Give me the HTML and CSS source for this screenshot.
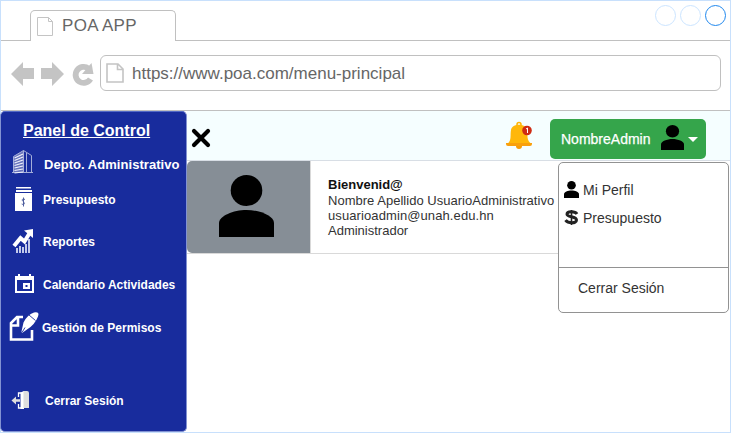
FILE: index.html
```html
<!DOCTYPE html>
<html lang="es">
<head>
<meta charset="utf-8">
<title>POA APP</title>
<link rel="stylesheet" href="styles.css">
</head>
<body>
<svg width="0" height="0" class="defs"><symbol id="person" viewBox="0 0 54 62" preserveAspectRatio="none"><circle cx="27" cy="15.5" r="15.5"/><path d="M0 62V48C0 41 14 35 27 35s27 6 27 13v14z"/></symbol></svg>
<div class="window">
  <header class="tabs">
    <div class="tab">
      <svg class="page-small" width="17" height="20" viewBox="0 0 17 20"><path d="M.5.5h11l4 4v14H.5zM11.5.5v4h4" fill="none" stroke="#c4c4c4"/></svg>
      <span>POA APP</span>
    </div>
    <div class="controls"><i></i><i></i><i class="active"></i></div>
  </header>
  <div class="toolbar">
    <svg class="nav" width="86" height="28" viewBox="0 0 86 28"><g fill="#c4c4c4"><path d="M0 13 12 1v6h11v11H12v7zM53 13 41 1v6H30v11h11v7z"/><path d="m80.500 2 2 11H71z"/></g><path d="M77.500 7.500A8 8 0 1 0 79.500 18" fill="none" stroke="#c4c4c4" stroke-width="5.800"/></svg>
    <div class="address">
      <svg width="18" height="21" viewBox="0 0 18 21"><path d="M1 1h11l5 5v13H1zM11.5 1v5.5H17" fill="none" stroke="#c4c4c4" stroke-width="1.6"/></svg>
      <span>https://www.poa.com/menu-principal</span>
    </div>
  </div>
  <div class="app">
    <aside class="sidebar">
      <h1>Panel de Control</h1>
      <nav>
        <a class="item dept"><svg width="42" height="36" viewBox="0 0 42 36"><path d="M13.500 26V10.500L23.500 4.500V26" fill="#6874bd" stroke="#a4aeda"/><g fill="none"><path d="M23.500 4.500l8 5V26M12 26.500h21M26.500 7v19" stroke="#a4aeda"/><path d="m14.500 12 8.500-4m-8.500 6.500 8.500-3.500m-8.500 6 8.500-3m-8.500 5.500 8.500-2.500m-8.500 5 8.500-2m-8.500 4.500 8.500-1.500m-8.500 4 8.500-1" stroke="#f0f2fc" stroke-width="1.200"/></g></svg><span>Depto. Administrativo</span></a>
        <a class="item budget"><svg width="42" height="36" viewBox="0 0 42 36"><path d="M16 5h15v1.500H16zM16 8h16v2H16zM15 11h17v18H15z" fill="#fff"/><path d="M25 17.500c-3-1.500-3.500.8-1.700 2.200s1.500 3.800-1.600 2.300M23.500 15.500v9" fill="none" stroke="#50609f"/></svg><span>Presupuesto</span></a>
        <a class="item reports"><svg width="42" height="36" viewBox="0 0 42 36"><path d="m14 22 6.500-8 4 3.500L30 8.500" fill="none" stroke="#fff" stroke-width="4"/><path d="m24 6.500 9-1.500v9z" fill="#fff"/><path d="M17 29v-5m3 5v-7m3 7v-6m3 6v-9m3 9V15" stroke="#c2caeb" stroke-width="2"/></svg><span>Reportes</span></a>
        <a class="item calendar"><svg width="42" height="36" viewBox="0 0 42 36"><path fill="#fff" fill-rule="evenodd" d="M15 9h3V7h2v2h9V7h2v2h3v17H15zm2 4v11h15V13zM23 16h7v6h-7zm2.500 2v2h2v-2z"/></svg><span>Calendario Actividades</span></a>
        <a class="item permissions"><svg width="42" height="36" viewBox="0 0 42 36"><path d="M23 7h-6l-6 6v16.500h21V20M18 8v7.500h-7" fill="none" stroke="#fff" stroke-width="2.600"/><path d="m22 23-.5-1.500 2-9Q27 5 34 2.500q6-1 4 4-3 8-11 13z" fill="#fff"/><path d="m29 5 6.500 5.500" stroke="#182c9d" stroke-width=".9"/><path d="m22 22.500 3-5" stroke="#182c9d" stroke-width=".9"/></svg><span>Gestión de Permisos</span></a>
        <a class="item logout"><svg width="42" height="36" viewBox="0 0 42 36"><path d="M18.500 14v-4h3M18.500 21v4h3" fill="none" stroke="#fff" stroke-width="1.300"/><path d="m11.500 17.500 4.500-4v2.700h4v2.600h-4v2.700z" fill="#dedede"/><path d="m20.500 9.500 3.500-1.500v18h-3.500z" fill="#fff"/><path d="M23.500 8H27q2 0 2 2v15h-5.500z" fill="#dedede"/></svg><span>Cerrar Sesión</span></a>
      </nav>
    </aside>
    <main>
      <div class="topbar">
        <svg class="close" width="20" height="20" viewBox="0 0 20 20"><path d="m3 3 14 14M17 3 3 17" stroke="#000" stroke-width="4.200" stroke-linecap="round"/></svg>
        <svg class="bell" width="28" height="30" viewBox="0 0 28 30"><circle cx="13" cy="3.500" r="2" fill="none" stroke="#ffb300" stroke-width="1.500"/><circle cx="13" cy="25" r="3" fill="#f79b06"/><path d="M1 23c5-3 3-9 4-14 1-7 15-7 16 0 1 5-1 11 5 14z" fill="#ffb70a"/><path d="M0 22h26v1q0 2-2 2H2q-2 0-2-2z" fill="#f9a00c"/><circle cx="21" cy="9.500" r="4.800" fill="#cf2b13"/><path d="m20 8 1.500-1v5" fill="none" stroke="#fff"/></svg>
        <button class="account"><span>NombreAdmin</span><svg width="23" height="25"><use href="#person"/></svg><i class="caret"></i></button>
      </div>
      <section class="profile">
        <div class="photo"><svg width="55" height="62"><use href="#person"/></svg></div>
        <div class="details"><b>Bienvenid@</b><span class="name">Nombre Apellido UsuarioAdministrativo</span><span class="mail">usuarioadmin@unah.edu.hn</span><span class="role">Administrador</span></div>
      </section>
      <div class="menu">
        <div class="options">
          <a><svg width="15" height="17"><use href="#person"/></svg><span class="mi">Mi Perfil</span></a>
          <a><svg width="15" height="17" viewBox="0 0 15 17"><path d="M13 5C11 2 3 2 3 5.300 3 8.500 12.500 7 12.500 11 12.500 15 4 14.500 1.500 11.200" fill="none" stroke="#222" stroke-width="3"/><path d="M7.500 1v15" stroke="#222" stroke-width="1.600"/></svg><span class="pr">Presupuesto</span></a>
        </div>
        <a class="end">Cerrar Sesión</a>
      </div>
    </main>
  </div>
</div>
</body>
</html>
```
FILE: styles.css
```css
* { box-sizing: border-box; }
body { margin: 0; background: #fff; font-family: "Liberation Sans", Arial, sans-serif; overflow: hidden; }
svg { display: block; flex: none; }
.defs { position: absolute; }
.window { width: 731px; height: 433px; border: 1px solid #c8e0fc; }
.tabs { height: 40px; border-bottom: 1px solid #c0c0c0; padding: 9px 4px 0 29px; display: flex; justify-content: space-between; }
.tab { width: 146px; height: 31px; border: 1px solid #c0c0c0; border-bottom: 0; border-radius: 5px 5px 0 0; background: #fff; display: flex; padding-left: 6px; color: #666; font-size: 17px; line-height: 30px; letter-spacing: .3px; }
.page-small { margin: 6px 8px 0 0; }
.controls { display: flex; gap: 4px; margin-top: -5px; }
.controls i { width: 21px; height: 21px; border: 1px solid #cce5ff; border-radius: 50%; }
.controls .active { border-color: #2088ee; }
.toolbar { height: 70px; border-bottom: 1px solid #c0c0c0; display: flex; padding: 14px 9px 0 10px; }
.nav { margin: 6px 3px 0 0; }
.address { width: 621px; height: 36px; border: 1px solid #c0c0c0; border-radius: 6px; display: flex; align-items: center; padding-left: 5px; color: #666; font-size: 17px; }
.address span { margin: 2px 0 0 8px; }
.app { display: flex; height: 321px; }
.sidebar { width: 187px; height: 321px; margin-left: -1px; background: #182c9d; border: 1px solid #8292d2; border-top-color: #5269c5; border-radius: 5px; color: #fff; flex: none; }
h1 { margin: 0; padding: 8px 0 0 22px; height: 34px; font-size: 16px; line-height: 22px; text-decoration: underline; white-space: nowrap; }
.item { display: flex; align-items: center; height: 36px; font-weight: bold; font-size: 12px; white-space: nowrap; margin-left: -1px; }
.item span { margin-left: 1px; }
.dept { font-size: 13px; letter-spacing: .04px; }
.dept span { margin-left: 2px; }
.reports { margin-top: 6px; }
.calendar { margin-top: 7px; }
.permissions { margin-top: 7px; }
.permissions span { margin-left: 0; }
.logout { margin-top: 37px; }
.logout span { margin-left: 3px; }
main { flex: 1; min-width: 0; position: relative; }
.topbar { height: 50px; background: #f5feff; border-bottom: 1px solid #d8dee5; display: flex; }
.close { margin: 17px 0 0 4px; }
.bell { margin: 10px 0 0 295px; }
.account { width: 156px; height: 40px; margin: 8px 0 0 16px; padding: 0 0 0 11px; border: 0; border-radius: 5px; background: #35a54b; color: #fff; display: flex; align-items: center; font: 14px "Liberation Sans", Arial, sans-serif; -webkit-text-stroke: .25px #fff; }
.account span { width: 90px; text-align: left; }
.account svg { margin: -3px 0 0 10px; color: #000; }
.caret { border: 5px solid transparent; border-top-color: #fff; border-bottom: 0; margin-left: 4px; }
.profile { height: 93px; width: 373px; display: flex; border-bottom: 1px solid #d9d9d9; }
.photo { width: 124px; height: 92px; background: #868e96; border-right: 1px solid #d9d9d9; border-radius: 5px 0 0 5px; padding: 14px 0 0 32px; }
.details { display: flex; flex-direction: column; padding: 16px 0 0 17px; font-size: 13px; line-height: 15.3px; color: #333; white-space: nowrap; }
.details b { color: #111; }
.details .name { padding-top: 1px; margin-bottom: -1px; letter-spacing: .02px; }
.details .mail { letter-spacing: .1px; }
.menu { position: absolute; left: 371px; top: 51px; width: 171px; height: 151px; background: #fff; border: 1px solid #929292; border-radius: 5px; font-size: 14px; color: #333; }
.options { height: 105px; border-bottom: 1px solid #929292; padding: 12px 0 0 5px; }
.options a { display: flex; align-items: center; height: 28px; color: #333; }
.options svg { color: #000; }
.options span { margin: 1px 0 0 4px; }
.end { display: block; padding: 11px 0 0 19px; line-height: 18px; }
```
